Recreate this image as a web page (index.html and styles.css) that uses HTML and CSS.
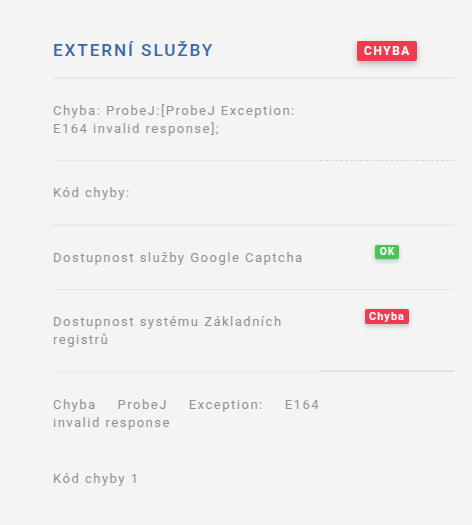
FILE: index.html
```html
<!DOCTYPE html>
<html lang="cs">
  <head>
    <meta charset="UTF-8" />
    <meta name="viewport" content="width=device-width, initial-scale=1.0" />
    <title>Externí služby</title>
    <link rel="stylesheet" href="styles.css">
  </head>

  <body>
    <div class="panel">
      <div class="row head">
        <h2 class="title">EXTERNÍ SLUŽBY</h2>
        <div class="status">
          <span class="badge badge-err badge-lg">CHYBA</span>
        </div>
      </div>

      <div class="row row-split">
        <div class="label">Chyba: ProbeJ:[ProbeJ Exception: E164 invalid response];</div>
        <div class="status"></div>
      </div>

      <div class="row row-thick">
        <div class="label">Kód chyby:</div>
        <div class="status"></div>
      </div>

      <div class="row row-thin">
        <div class="label">Dostupnost služby Google Captcha</div>
        <div class="status">
          <span class="badge badge-ok">OK</span>
        </div>
      </div>

      <div class="row row-split2">
        <div class="label">Dostupnost systému Základních registrů</div>
        <div class="status">
          <span class="badge badge-err">Chyba</span>
        </div>
      </div>

      <div class="row">
        <div class="label justify">Chyba ProbeJ Exception: E164 invalid response</div>
        <div class="status"></div>
      </div>

      <div class="row last">
        <div class="label">Kód chyby 1</div>
        <div class="status"></div>
      </div>
    </div>
  </body>
</html>
```

FILE: styles.css
```css
html,
body {
  margin: 0;
  background-color: #f4f4f4;
}

body {
  font-family: Roboto, "Liberation Sans", sans-serif;
  color: #919191;
}

.panel {
  padding: 38px 18px 30px 53px;
}

.row {
  display: grid;
  grid-template-columns: 267px 1fr;
}

.label {
  padding: 22.5px 0;
  font-size: 13px;
  line-height: 18px;
  letter-spacing: 1.5px;
}

.justify {
  padding-top: 24px;
  text-align: justify;
}

.status {
  display: flex;
  justify-content: center;
  align-items: flex-start;
  padding-top: 19px;
}

.head {
  border-bottom: 2px solid #e6e9ee;
}
.head .status {
  padding-top: 3px;
}

.title {
  margin: 0;
  padding-bottom: 15px;
  font-size: 17px;
  line-height: 24px;
  font-weight: 500;
  letter-spacing: 2px;
  color: #3c69a8;
}

.row-split .label {
  border-bottom: 1px solid #e8e8e8;
}
.row-split .status {
  border-bottom: 1px dashed #d6d6d6;
}

.row-thick .label,
.row-thick .status {
  border-bottom: 2px solid #e7eaee;
}

.row-thin .label,
.row-thin .status {
  border-bottom: 1px solid #e6e6e6;
}

.row-split2 .label {
  border-bottom: 1px solid #e9e9e9;
}
.row-split2 .status {
  border-bottom: 2px solid #e2e2e2;
}

.last .label {
  padding-top: 15px;
}

.badge {
  display: inline-block;
  padding: 0 4px;
  height: 15px;
  line-height: 15px;
  border-radius: 2px;
  font-size: 11px;
  font-weight: 700;
  letter-spacing: 1px;
  color: #fff;
  box-shadow: 0 2px 5px rgba(0, 0, 0, 0.22);
}

.badge-err {
  background-color: #ef3a50;
}

.badge-ok {
  height: 14px;
  line-height: 14px;
  padding: 0 4px 0 5px;
  font-size: 10px;
  background-color: #4cc455;
}

.badge-lg {
  height: 20px;
  line-height: 20px;
  padding: 0 6px 0 7px;
  font-size: 12px;
  letter-spacing: 1.5px;
  box-shadow: 0 3px 7px rgba(0, 0, 0, 0.25);
}
```
